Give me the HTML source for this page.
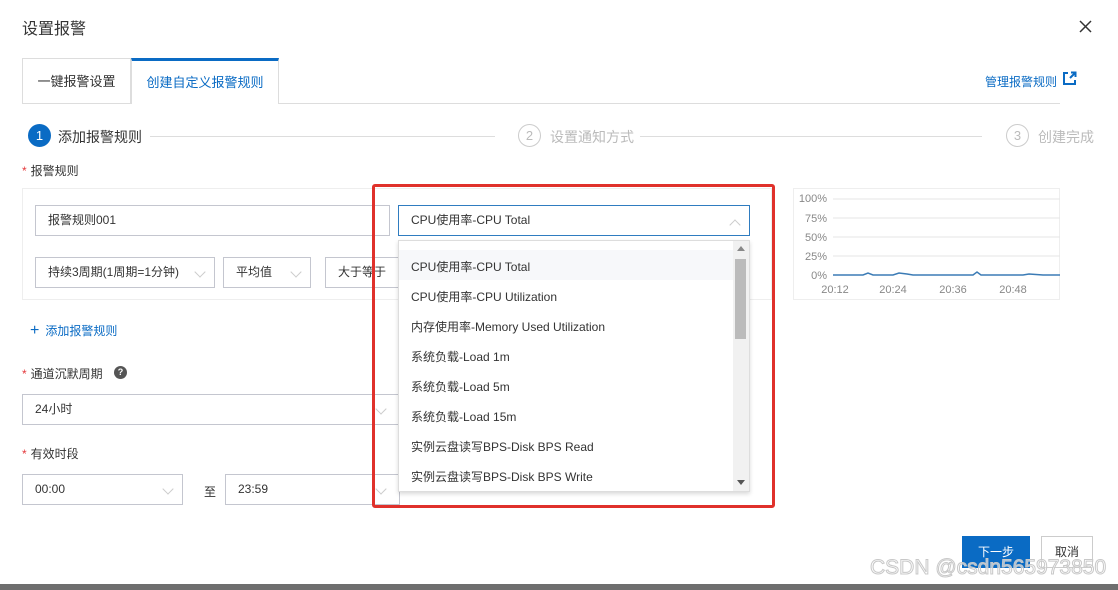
<!DOCTYPE html>
<html><head><meta charset="utf-8"><style>
*{box-sizing:border-box;margin:0;padding:0}
body{width:1118px;height:590px;background:#fff;position:relative;overflow:hidden;font-family:"Liberation Sans","Noto Sans CJK SC",sans-serif;color:#333;font-size:12px}
.a{position:absolute}
.inp{position:absolute;border:1px solid #c4c6cf;background:#fff;height:31px;line-height:29px;padding-left:12px;font-size:12px;color:#333}
.arr{position:absolute;right:10px;top:10px;width:8px;height:8px;border-right:1px solid #ccc;border-bottom:1px solid #ccc;transform:rotate(45deg)}
.lbl{position:absolute;font-size:12px;color:#333}
.lbl b{color:#e4393c;font-weight:normal;margin-right:4px}
.step{position:absolute;width:23px;height:23px;border-radius:50%;border:1px solid #ccc;color:#bbb;text-align:center;line-height:21px;font-size:13px}
.item{position:absolute;left:12px;font-size:12px;color:#333}
</style></head><body>
<div class="a" style="left:22px;top:15px;font-size:16px;color:#333">设置报警</div>
<svg class="a" style="left:1079px;top:20px" width="13" height="13"><path d="M1 1L12 12M12 1L1 12" stroke="#333" stroke-width="1.5"/></svg>
<div class="a" style="left:22px;top:58px;width:109px;height:46px;border:1px solid #ddd;border-bottom:none;font-size:13px;line-height:46px;text-align:center;color:#333">一键报警设置</div>
<div class="a" style="left:131px;top:58px;width:148px;height:46px;border:1px solid #ddd;border-top:3px solid #0a6bc4;border-bottom:none;background:#fff;font-size:13px;line-height:44px;text-align:center;color:#0a6bc4">创建自定义报警规则</div>
<div class="a" style="left:279px;top:103px;width:781px;height:1px;background:#ddd"></div>
<div class="a" style="left:22px;top:103px;width:109px;height:1px;background:#ddd"></div>
<div class="a" style="left:985px;top:73px;font-size:12px;color:#0a6bc4">管理报警规则</div>
<svg class="a" style="left:1062px;top:71px" width="15" height="15"><path d="M6 2H2V13H13V9" fill="none" stroke="#0a6bc4" stroke-width="2"/><path d="M8 7L13 2M9 1.5H13.5V6" fill="none" stroke="#0a6bc4" stroke-width="2"/></svg>
<div class="step" style="left:28px;top:124px;background:#0a6bc4;border-color:#0a6bc4;color:#fff">1</div>
<div class="a" style="left:58px;top:127px;font-size:14px;color:#333">添加报警规则</div>
<div class="a" style="left:150px;top:136px;width:345px;height:1px;background:#ddd"></div>
<div class="step" style="left:518px;top:124px">2</div>
<div class="a" style="left:550px;top:127px;font-size:14px;color:#bbb">设置通知方式</div>
<div class="a" style="left:640px;top:136px;width:342px;height:1px;background:#ddd"></div>
<div class="step" style="left:1006px;top:124px">3</div>
<div class="a" style="left:1038px;top:127px;font-size:14px;color:#bbb">创建完成</div>
<div class="lbl" style="left:22px;top:162px"><b>*</b>报警规则</div>
<div class="a" style="left:22px;top:188px;width:750px;height:112px;border:1px solid #eee"></div>
<div class="inp" style="left:35px;top:205px;width:355px">报警规则001</div>
<div class="inp" style="left:35px;top:257px;width:180px">持续3周期(1周期=1分钟)<span class="arr"></span></div>
<div class="inp" style="left:223px;top:257px;width:88px">平均值<span class="arr"></span></div>
<div class="inp" style="left:325px;top:257px;width:80px">大于等于</div>
<div class="a" style="left:793px;top:188px;width:267px;height:112px;border:1px solid #eee;background:#fff"></div>
<svg class="a" style="left:793px;top:188px" width="267" height="112" font-family="Liberation Sans" font-size="11" fill="#888">
<text x="34" y="14" text-anchor="end">100%</text><text x="34" y="34" text-anchor="end">75%</text><text x="34" y="53" text-anchor="end">50%</text><text x="34" y="72" text-anchor="end">25%</text><text x="34" y="91" text-anchor="end">0%</text>
<g stroke="#e5e5e5"><line x1="40" y1="11" x2="275" y2="11"/><line x1="40" y1="30" x2="275" y2="30"/><line x1="40" y1="49" x2="275" y2="49"/><line x1="40" y1="68" x2="275" y2="68"/></g>
<path d="M40 87L70 87L75 85L80 87L100 87L106 85L114 86L120 87L180 87L184 84L188 87L230 87L236 86L250 87L275 87" fill="none" stroke="#3b7bb5" stroke-width="1.5"/>
<text x="42" y="105" text-anchor="middle">20:12</text><text x="100" y="105" text-anchor="middle">20:24</text><text x="160" y="105" text-anchor="middle">20:36</text><text x="220" y="105" text-anchor="middle">20:48</text>
</svg>
<div class="lbl" style="left:22px;top:365px"><b>*</b>通道沉默周期</div>
<div class="a" style="left:114px;top:366px;width:13px;height:13px;border-radius:50%;background:#555;color:#fff;font-size:9px;text-align:center;line-height:13px;font-weight:bold">?</div>
<div class="a" style="left:30px;top:322px;color:#0a6bc4;font-size:12px"><span style="font-size:16px;margin-right:6px">+</span>添加报警规则</div>
<div class="inp" style="left:22px;top:394px;width:378px">24小时<span class="arr" style="right:14px"></span></div>
<div class="lbl" style="left:22px;top:445px"><b>*</b>有效时段</div>
<div class="inp" style="left:22px;top:474px;width:161px">00:00<span class="arr"></span></div>
<div class="a" style="left:204px;top:483px;font-size:12px">至</div>
<div class="inp" style="left:225px;top:474px;width:175px">23:59<span class="arr" style="right:14px"></span></div>
<div class="inp" style="left:398px;top:205px;width:352px;border-color:#2f7cc0">CPU使用率-CPU Total<span class="arr" style="transform:rotate(225deg);top:15px;border-color:#ccc"></span></div>
<div class="a" style="left:398px;top:240px;width:352px;height:252px;border:1px solid #ddd;background:#fff;box-shadow:0 2px 4px rgba(0,0,0,.15)">
<div class="a" style="left:0;top:9px;width:334px;height:30px;background:#f7f8fa"></div>
<div class="item" style="top:17px">CPU使用率-CPU Total</div>
<div class="item" style="top:47px">CPU使用率-CPU Utilization</div>
<div class="item" style="top:77px">内存使用率-Memory Used Utilization</div>
<div class="item" style="top:107px">系统负载-Load 1m</div>
<div class="item" style="top:137px">系统负载-Load 5m</div>
<div class="item" style="top:167px">系统负载-Load 15m</div>
<div class="item" style="top:197px">实例云盘读写BPS-Disk BPS Read</div>
<div class="item" style="top:227px">实例云盘读写BPS-Disk BPS Write</div>
<div class="a" style="left:334px;top:0;width:16px;height:250px;background:#f1f1f1"></div>
<div class="a" style="left:336px;top:18px;width:11px;height:80px;background:#bbb"></div>
<div class="a" style="left:338px;top:5px;border:4px solid transparent;border-bottom:5px solid #888;border-top:none"></div>
<div class="a" style="left:338px;top:239px;border:4px solid transparent;border-top:5px solid #555;border-bottom:none"></div>
</div>
<div class="a" style="left:372px;top:184px;width:403px;height:324px;border:3px solid #e0312b;border-radius:3px"></div>
<div class="a" style="left:962px;top:536px;width:68px;height:32px;background:#0a6bc4;color:#fff;font-size:12px;text-align:center;line-height:32px">下一步</div>
<div class="a" style="left:1041px;top:536px;width:52px;height:32px;border:1px solid #ccc;background:#fff;font-size:12px;text-align:center;line-height:30px">取消</div>
<div class="a" style="left:870px;top:556px;font-size:21px;color:rgba(255,255,255,.6);-webkit-text-stroke:1px #c8c8c8">CSDN @csdn565973850</div>
<div class="a" style="left:0;top:584px;width:1118px;height:6px;background:#6e6e6e"></div>
</body></html>
